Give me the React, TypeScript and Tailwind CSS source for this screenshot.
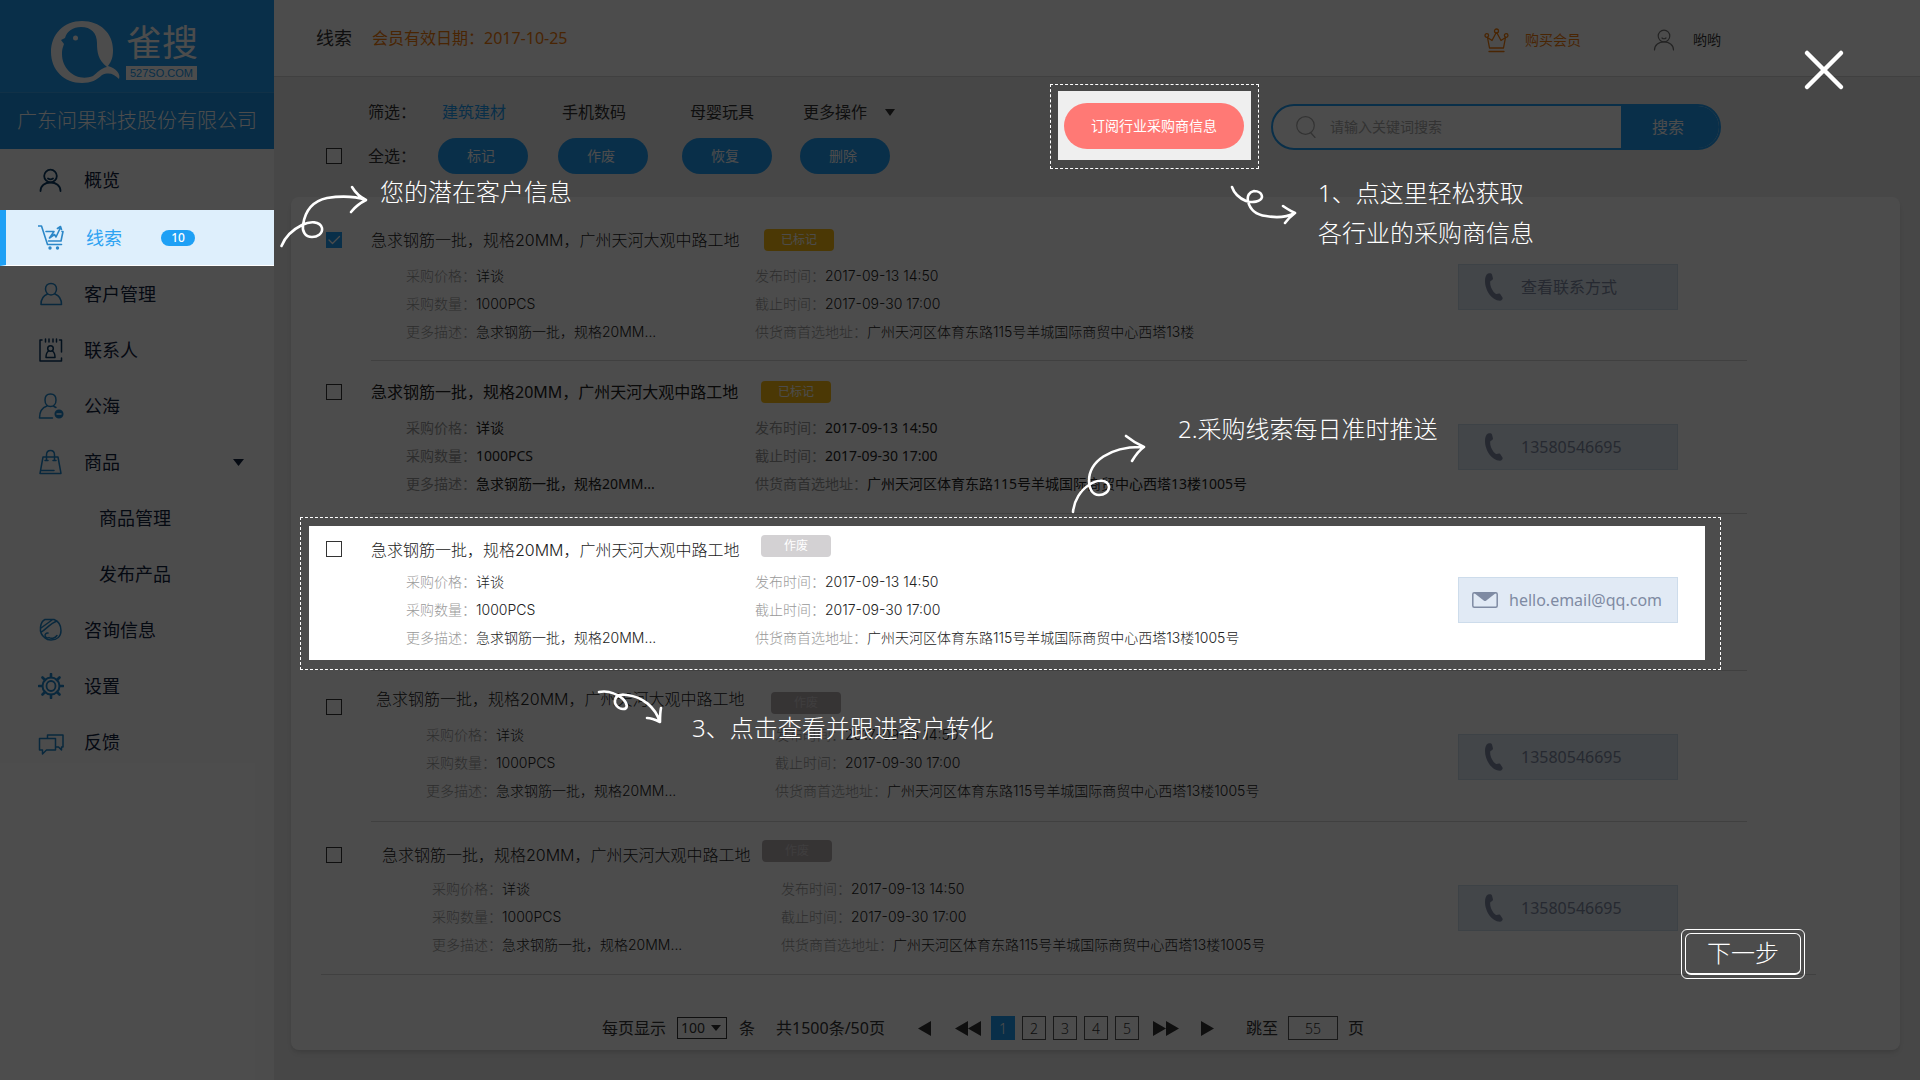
import React from "react";

const svgProps = { fill: "none", strokeLinecap: "round", strokeLinejoin: "round" } as const;

function Icon({ name }: { name: string }) {
  const blue = "#1f87cc";
  const navy = "#0b3a63";
  return (
    <svg width="26" height="26" viewBox="0 0 26 26" stroke={blue} strokeWidth="1.5" className="shrink-0" aria-hidden="true" {...svgProps}>
      {name === "overview" && (
        <g stroke={navy} strokeWidth="1.8">
          <circle cx="12.5" cy="9" r="6.3" />
          <path d="M2.5 24c0-5.5 4.500-8.500 10-8.500s10 3 10 8.500M10 11.500c1.500 1 3.500 1 5 0" />
        </g>
      )}
      {name === "cart" && (
        <g stroke="#2b87c8" strokeWidth="1.6">
          <path d="M0.500 1h3l6 18.500h14M24 6.500h1l-2 9.500h-12.500M8 6.500h8l-4.500 6.500 5-3.500 1.500 2.500 4.500-9.500M19.500 3.500l3-2 1 3" />
          <g fill="#2b87c8" stroke="none"><circle cx="12" cy="23" r="1.7" /><circle cx="19.500" cy="23" r="1.7" /></g>
        </g>
      )}
      {name === "customer" && <path d="M13 2.500c-3.500 0-5.500 2.500-5.500 5.500s2 6 5.500 6 5.500-3 5.500-6-2-5.500-5.500-5.500zM9.500 13c-4 1.500-6.500 4-6.500 10.500h20.500c0-6.500-2.500-9-6.500-10.500" />}
      {name === "contact" && (
        <g stroke={navy}>
          <path d="M4 3H2v21h21.500v-3M21.500 3h2v12M7.500 2v3M11 2v3M15 2v3M18.500 2v3" />
          <circle cx="12.500" cy="11.500" r="2.800" />
          <path d="M10.500 14c-1.500 1-2.500 2.500-2.500 6.500h9c0-4-1-5.500-2.500-6.500" />
        </g>
      )}
      {name === "pool" && (
        <g>
          <path d="M12.500 1c-3.500 0-5.500 2.500-5.500 6s2 6.500 5.500 6.500 5.500-3 5.500-6.500-2-6-5.500-6zM9 13c-4.500 1.500-7.500 4.500-7.500 12h13M16 13.500l2 1" />
          <circle cx="21" cy="21" r="3.800" fill={blue} />
          <path d="M19 21h4" stroke="#fff" />
        </g>
      )}
      {name === "bag" && <path d="M5 8h15l3 16.500H2zM8.500 11.500V6c0-6 8-6 8 0v5.500M7 11.500h3M15 11.500h3M3 21.500h13" />}
      {name === "consult" && (
        <g>
          <path d="M7 2.500h9c5 2 7 6 7 11 0 6-4 9.500-10 9.500-4 0-5-1-6-2C3 18 2 14 2.500 10 3 6 4 4 7 2.500zM3 11L14 3M3.500 15C8 12 13 6 19 4" />
          <path d="M10 16a2.500 2.500 0 1 0 1 4.500c2 1.500 6 1 8-2" />
        </g>
      )}
      {name === "settings" && (
        <g strokeWidth="2">
          <circle cx="13" cy="13" r="8.500" />
          <ellipse cx="13" cy="13" rx="4.500" ry="5" strokeWidth="1.800" />
          <path d="M13 1v3M13 22v3M1 13h3M22 13h3M4.500 4.500l2.500 2.500M19 19l2.500 2.500M4.500 21.500L7 19M19 7l2.500-2.500" strokeWidth="2.600" />
        </g>
      )}
      {name === "feedback" && <path d="M1.500 9.500h16v11.500H8.500L4.500 25v-4h-3zM9.500 9.500V6H25v12h-1.500v3l-3-3h-3" />}
    </svg>
  );
}

function Caret({ className, dir = "down" }: { className: string; dir?: "down" | "left" | "right" }) {
  const d = { down: "M0 0h12L6 12z", left: "M12 0v12L0 6z", right: "M0 0l12 6L0 12z" }[dir];
  return (
    <svg viewBox="0 0 12 12" preserveAspectRatio="none" className={className} fill="currentColor" aria-hidden="true">
      <path d={d} />
    </svg>
  );
}

const menu = [
  { icon: "customer", label: "客户管理" },
  { icon: "contact", label: "联系人" },
  { icon: "pool", label: "公海" },
  { icon: "bag", label: "商品", open: true },
  { label: "商品管理" },
  { label: "发布产品" },
  { icon: "consult", label: "咨询信息" },
  { icon: "settings", label: "设置" },
  { icon: "feedback", label: "反馈" },
];

function Sidebar() {
  return (
    <aside className="w-[274px] shrink-0 bg-white text-lg text-[#12233f]">
      <div className="flex h-[93px] items-start border-b border-[#3aa6ee] bg-[#209df3] pl-[50px] pt-5 text-white">
        <svg width="72" height="64" viewBox="50 20 72 64" className="shrink-0" aria-hidden="true">
          <path
            fill="currentColor"
            fillRule="evenodd"
            d="M82 21C64 21 51 34 51 52s13 31 31 31c9 0 15-3 20-8 7-3 12-1 17 4 2-5-3-11-11-13 4-5 5-10 5-16C113 33 100 21 82 21zM81 27c10 0 16 6 16 16 0 9 1 17 10 24-6 1-10 6-14 9-15 6-31-5-31-22 0-5 1-7 2-10l-3-4 4-2c2-7 8-11 16-11z"
          />
          <circle cx="75.500" cy="38" r="2.500" fill="currentColor" />
        </svg>
        <div className="flex flex-col items-start pl-1">
          <span className="text-4xl/[46px]">雀搜</span>
          <span className="bg-white px-1 font-['Liberation_Sans',sans-serif] text-[11px]/[14px] text-[#209df3]">527SO.COM</span>
        </div>
      </div>
      <div className="flex h-14 items-center justify-center bg-[#1b93e6] text-xl font-light text-white">广东问果科技股份有限公司</div>
      <nav>
        <a href="#overview" className="flex h-[61px] items-center gap-5 pl-[38px]">
          <Icon name="overview" />
          概览
        </a>
        <a href="#leads" className="relative z-20 flex h-14 items-center border-b border-l-[6px] border-b-white border-l-[#1ea0f5] bg-[#deeffc] pl-8 text-[#2ea3f2]">
          <Icon name="cart" />
          <span className="pl-[22px]">线索</span>
          <span className="ml-[39px] h-4 w-[34px] rounded-full bg-[#1ea0f5] text-center text-xs/4 font-medium text-white">10</span>
        </a>
        {menu.map((m) => (
          <a key={m.label} href={"#" + m.label} className={m.icon ? "flex h-14 items-center gap-5 pl-[38px]" : "flex h-14 items-center pl-[99px]"}>
            {m.icon && <Icon name={m.icon} />}
            <span>{m.label}</span>
            {m.open && <Caret className="ml-auto mr-[30px] h-[7px] w-[11px]" />}
          </a>
        ))}
      </nav>
    </aside>
  );
}

function Header() {
  return (
    <header className="flex h-[77px] items-center border-b border-[#d8d8d8] bg-white pl-[42px] pr-[199px]">
      <h1 className="text-lg text-[#333]">线索</h1>
      <p className="ml-5 text-base text-[#f57c0a]">会员有效日期：2017-10-25</p>
      <a href="#vip" className="ml-auto flex items-center gap-4 pt-1 text-sm text-[#f57c0a]">
        <svg width="25" height="25" viewBox="0 0 25 25" stroke="currentColor" strokeWidth="1.300" aria-hidden="true" {...svgProps}>
          <circle cx="12.500" cy="3" r="2" /><circle cx="2.800" cy="7.500" r="1.800" /><circle cx="22.200" cy="7.500" r="1.800" />
          <path d="M3.500 9.500L5.500 20h14l2-10.500-4.500 3-4-7.500h-1L8 12.500zM5 23.500h15" />
        </svg>
        购买会员
      </a>
      <a href="#account" className="ml-[72px] flex items-center gap-[18px] pt-1 text-sm text-[#333]">
        <svg width="22" height="22" viewBox="0 0 22 22" stroke="#777" strokeWidth="1.200" aria-hidden="true" {...svgProps}>
          <circle cx="11" cy="7" r="5.800" />
          <path d="M1.500 21c0-5 4.500-8.200 9.500-8.200s9.500 3.200 9.500 8.200M9 9c1 1 3 1 4 0" />
        </svg>
        哟哟
      </a>
    </header>
  );
}

const check = "size-4 shrink-0 appearance-none border border-[#333] bg-white";
const pill = "h-9 w-[90px] rounded-full bg-[#209df3] pr-1 text-sm text-white";

function Toolbar() {
  return (
    <section className="flex h-[120px] items-start pl-[52px] pr-[199px]">
      <div className="grid auto-rows-[36px] grid-cols-[42px_70px_120px_124px_118px_100px] items-center gap-y-2 pt-[17px] text-base text-[#333]">
        <span />
        <span>筛选：</span>
        <a href="#c1" className="pl-1 text-[#209df3]">建筑建材</a>
        <a href="#c2" className="pl-1">手机数码</a>
        <a href="#c3" className="pl-2">母婴玩具</a>
        <button className="flex items-center gap-[18px] pl-[3px]">
          更多操作
          <Caret className="h-[7px] w-[10px]" />
        </button>
        <input type="checkbox" id="all" className={check} />
        <label htmlFor="all">全选：</label>
        <button className={pill}>标记</button>
        <button className={pill}>作废</button>
        <button className={pill}>恢复</button>
        <button className={pill}>删除</button>
      </div>
      <div className="relative z-20 ml-auto mt-[7px] border border-dashed border-white px-[7px] pb-2 pt-1.5">
        <div className="bg-[#efefef] pb-[11px] pl-1.5 pr-[7px] pt-3">
          <button className="block h-[46px] w-[180px] rounded-full bg-[#ff7975] text-sm text-white">订阅行业采购商信息</button>
        </div>
      </div>
      <form className="ml-3 mt-[27px] flex h-[46px] w-[450px] overflow-hidden rounded-full border-2 border-[#209df3] bg-white">
        <label htmlFor="q" className="flex items-center pl-[23px] text-[#aaa]">
          <svg width="20" height="22" viewBox="0 0 20 22" stroke="currentColor" strokeWidth="1.200" aria-hidden="true" {...svgProps}>
            <circle cx="9.500" cy="9.500" r="8.800" />
            <path d="M15 17l4 4.500" />
          </svg>
        </label>
        <input id="q" placeholder="请输入关键词搜索" className="min-w-0 flex-1 pl-3.5 text-sm outline-none placeholder:text-[#aaa]" />
        <button type="button" className="w-[98px] bg-[#209df3] pr-1 text-base text-white">搜索</button>
      </form>
    </section>
  );
}

type Lead = {
  id: number;
  row: string;
  top: string;
  box: string;
  indent: string;
  titleW: string;
  badge: string;
  tag: string;
  details: string;
  font: string;
  addr: string;
  contact: string;
  checked?: boolean;
  mail?: boolean;
  focus?: boolean;
};

const inter = "font-[Inter,'Noto_Sans_CJK_SC',sans-serif] font-light";
const addr = "广州天河区体育东路115号羊城国际商贸中心西塔13楼";
const yellow = "text-white bg-[#fabd12]";
const gray = "text-white bg-[#d3d1d3]";
const faded = "text-[#f0f0f0]/50 bg-[#b6aeb0]";

const leads: Lead[] = [
  { id: 1, row: "min-h-[159px]", top: "pt-[27px]", box: "mt-1", indent: "pl-0", titleW: "w-[393px]", badge: yellow, tag: "已标记", details: "mt-2.5 pl-[35px]", font: inter, addr, contact: "查看联系方式", checked: true },
  { id: 2, row: "min-h-[152px]", top: "pt-[19px]", box: "mt-1", indent: "pl-0", titleW: "w-[390px]", badge: yellow, tag: "已标记", details: "mt-2.5 pl-[35px]", font: "", addr: addr + "1005号", contact: "13580546695" },
  { id: 3, row: "min-h-[156px]", top: "pt-6", box: "mt-[3px]", indent: "pl-0", titleW: "w-[390px]", badge: "mb-2 " + gray, tag: "作废", details: "mt-1.5 pl-[35px]", font: inter, addr: addr + "1005号", contact: "hello.email@qq.com", mail: true, focus: true },
  { id: 4, row: "min-h-[150px]", top: "pt-4", box: "mt-3", indent: "pl-[5px]", titleW: "w-[395px]", badge: "mt-2 " + faded, tag: "作废", details: "mt-2.5 pl-[50px]", font: inter, addr: addr + "1005号", contact: "13580546695" },
  { id: 5, row: "min-h-[152px]", top: "pt-[21px]", box: "mt-1", indent: "pl-[11px]", titleW: "w-[380px]", badge: "mb-2 " + faded, tag: "作废", details: "mt-2 pl-[50px]", font: inter, addr: addr + "1005号", contact: "13580546695" },
];

function Field({ label, value }: { label: string; value: string }) {
  return (
    <div className="flex">
      <dt className="text-[#999]">{label}：</dt>
      <dd>{value}</dd>
    </div>
  );
}

function LeadRow({ lead: l, last }: { lead: Lead; last: boolean }) {
  return (
    <li>
      <div className={"relative flex items-start pl-[35px] pr-[222px] " + l.row + (l.focus ? " z-20" : "")}>
        {l.focus && (
          <>
            <div className="absolute bottom-0 left-[9px] right-[179px] top-[3px] border border-dashed border-white" />
            <div className="absolute bottom-2.5 left-[18px] right-[195px] top-3 bg-white" />
          </>
        )}
        <div className={"relative flex w-[45px] shrink-0 " + l.top}>
          <input
            type="checkbox"
            id={"lead" + l.id}
            defaultChecked={l.checked}
            className={"peer size-4 appearance-none border border-[#333] bg-white checked:border-[#209df3] checked:bg-[#209df3] " + l.box}
          />
          {l.checked && (
            <svg viewBox="0 0 16 16" className="pointer-events-none absolute left-0 size-4 translate-y-1" stroke="#fff" strokeWidth="1.300" aria-hidden="true" {...svgProps}>
              <path d="M3 8l3.500 3.500L13.500 4.500" />
            </svg>
          )}
        </div>
        <div className={"relative min-w-0 flex-1 " + l.top + " " + l.indent + " " + l.font}>
          <div className="flex h-6 items-center text-base text-[#222]">
            <label htmlFor={"lead" + l.id} className={"shrink-0 whitespace-nowrap " + l.titleW}>急求钢筋一批，规格20MM，广州天河大观中路工地</label>
            <span className={"h-[22px] w-[70px] rounded-sm text-center text-xs/[22px] font-normal " + l.badge}>{l.tag}</span>
          </div>
          <div className={"flex whitespace-nowrap text-sm/7 text-[#222] " + l.details}>
            <dl className="w-[349px] shrink-0">
              <Field label="采购价格" value="详谈" />
              <Field label="采购数量" value="1000PCS" />
              <Field label="更多描述" value="急求钢筋一批，规格20MM..." />
            </dl>
            <dl>
              <Field label="发布时间" value="2017-09-13 14:50" />
              <Field label="截止时间" value="2017-09-30 17:00" />
              <Field label="供货商首选地址" value={l.addr} />
            </dl>
          </div>
        </div>
        <button className={"relative mt-[63px] flex h-[46px] w-[220px] shrink-0 items-center border border-[#cddceb] bg-[#e1eaf5] text-base text-[#7f8ba3] " + (l.mail ? "gap-[11px] pl-[13px]" : "gap-[18px] pl-[26px]")}>
          {l.mail ? (
            <svg width="26" height="16" viewBox="0 0 26 16" aria-hidden="true">
              <rect x="0.800" y="0.800" width="24.400" height="14.400" rx="1.500" fill="none" stroke="currentColor" strokeWidth="1.500" />
              <path d="M1.500 0.500h23L14 8.700q-1 .7-2 0z" fill="currentColor" />
            </svg>
          ) : (
            <svg width="18" height="28" viewBox="0 0 18 28" fill="currentColor" aria-hidden="true">
              <path d="M3 0.500C5 0 6.500 0 7 1.500l1 4c0 1.500-2 2-2.800 3C4.800 13 7.500 18.500 11 21c1.500.3 3-1 4.200 0l2.300 3.500c.6 1-.4 3-2.500 3.200C6.500 27.500 0 17 0 8 0 4 1 1.500 3 .5z" />
            </svg>
          )}
          {l.contact}
        </button>
      </div>
      <div className={last ? "ml-[30px] mr-[84px] h-px bg-[#d8d8d8]" : "ml-20 mr-[153px] h-px bg-[#d8d8d8]"} />
    </li>
  );
}

function Pager() {
  return (
    <nav className="mb-2.5 mt-[41px] flex h-6 items-center whitespace-nowrap pl-[311px] text-base text-[#333]">
      <label htmlFor="size">每页显示</label>
      <span className="relative ml-[11px] flex items-center">
        <select id="size" className="h-[22px] w-[50px] appearance-none border border-[#333] bg-white pl-[3px] text-sm/5 outline-none">
          <option>100</option>
        </select>
        <Caret className="pointer-events-none absolute right-1.5 h-[6px] w-[10px]" />
      </span>
      <span className="ml-3">条</span>
      <span className="ml-[21px] w-[111px]">共1500条/50页</span>
      <button aria-label="上一页" className="ml-[31px]"><Caret dir="left" className="h-[15px] w-[13px]" /></button>
      <button aria-label="首页" className="ml-6 flex"><Caret dir="left" className="h-[15px] w-[13px]" /><Caret dir="left" className="h-[15px] w-[13px]" /></button>
      <span className="ml-2.5 flex gap-[7px]">
        {[1, 2, 3, 4, 5].map((n) => (
          <button
            key={n}
            className={n === 1 ? "size-6 border border-[#209df3] bg-[#209df3] text-sm/6 font-light text-white" : "size-6 border border-[#555] text-sm/6 font-light"}
          >
            {n}
          </button>
        ))}
      </span>
      <button aria-label="末页" className="ml-3.5 flex"><Caret dir="right" className="h-[15px] w-[13px]" /><Caret dir="right" className="h-[15px] w-[13px]" /></button>
      <button aria-label="下一页" className="ml-[22px]"><Caret dir="right" className="h-[15px] w-[13px]" /></button>
      <label htmlFor="goto" className="ml-8">跳至</label>
      <input id="goto" defaultValue="55" className="mx-2.5 h-6 w-[50px] border border-[#555] text-center text-sm font-light outline-none" />
      <span>页</span>
    </nav>
  );
}

function Arrow({ className, box, d }: { className: string; box: string; d: string }) {
  return (
    <svg viewBox={box} className={"absolute " + className} stroke="#fff" strokeWidth="2.600" aria-hidden="true" {...svgProps}>
      <path d={d} />
    </svg>
  );
}

function Guide() {
  return (
    <div className="pointer-events-none absolute inset-0 z-30 whitespace-nowrap text-2xl/10 font-light text-white">
      <Arrow className="left-[278px] top-[182px] h-[68px] w-[94px]" box="278 182 94 68" d="M281.500 246C285 237 292 230 302 225c8-4 18-4 20 3 1 6-5 9-10 9-7 0-10-6-9-12 2-14 10-24 24-27 13-2 27-2 39 2M352 187c3 5 8 10 14 13-6 3-11 7-15 12" />
      <p className="absolute left-[380px] top-[172px]">您的潜在客户信息</p>
      <Arrow className="left-[1229px] top-[184px] h-[42px] w-[70px]" box="1229 184 70 42" d="M1232 187c2 6 7 11 14 14 6 2 15 1 16-4 0-4-4-6-8-6-5 1-7 5-6 10 2 9 9 14 18 15 10 2 21 1 29-3M1283 206c4 3 8 5 12 7-4 3-7 6-10 10" />
      <p className="absolute left-[1318px] top-[173px]">1、点这里轻松获取<br />各行业的采购商信息</p>
      <Arrow className="left-[1069px] top-[432px] h-[84px] w-[80px]" box="1069 432 80 84" d="M1073 512c1-12 8-22 16-27 8-6 19-6 20 2 0 5-5 8-10 8-7 0-10-7-10-14 0-19 20-35 55-34M1126 436c5 4 11 8 18 11-6 4-9 9-12 14" />
      <p className="absolute left-[1178px] top-[409px]">2.采购线索每日准时推送</p>
      <Arrow className="left-[595px] top-[687px] h-[40px] w-[70px]" box="595 687 70 40" d="M599 692c10-2 19 3 24 7 5 5 5 10 0 10-5 0-9-5-8-9 1-5 6-6 12-5 16 2 28 12 33 27M647 718c5 0 9 2 13 4 0-5 0-9 1-14" />
      <p className="absolute left-[692px] top-[708px]">3、点击查看并跟进客户转化</p>
      <button aria-label="关闭" className="pointer-events-auto absolute right-[75px] top-[49px]">
        <svg width="42" height="42" viewBox="0 0 42 42" stroke="#fff" strokeWidth="4.500" aria-hidden="true" {...svgProps}>
          <path d="M4 4l34 34M38 4L4 38" />
        </svg>
      </button>
      <button className="pointer-events-auto absolute right-[115px] top-[929px] rounded-md border border-white p-[3px]">
        <span className="block rounded-md border border-b-2 border-white px-[21px] pb-0.5 pt-px text-2xl/9">下一步</span>
      </button>
    </div>
  );
}

export default function App() {
  return (
    <div className="relative flex min-h-screen bg-[#eee] font-['Noto_Sans','Noto_Sans_CJK_SC',sans-serif]">
      <Sidebar />
      <main className="min-w-0 flex-1">
        <Header />
        <Toolbar />
        <section className="ml-[17px] mr-5 overflow-hidden rounded-lg bg-white pt-1 shadow-md">
          <ul>
            {leads.map((l, i) => (
              <LeadRow key={l.id} lead={l} last={i === leads.length - 1} />
            ))}
          </ul>
          <Pager />
        </section>
      </main>
      <div className="absolute inset-0 z-10 bg-black/70" />
      <Guide />
    </div>
  );
}
